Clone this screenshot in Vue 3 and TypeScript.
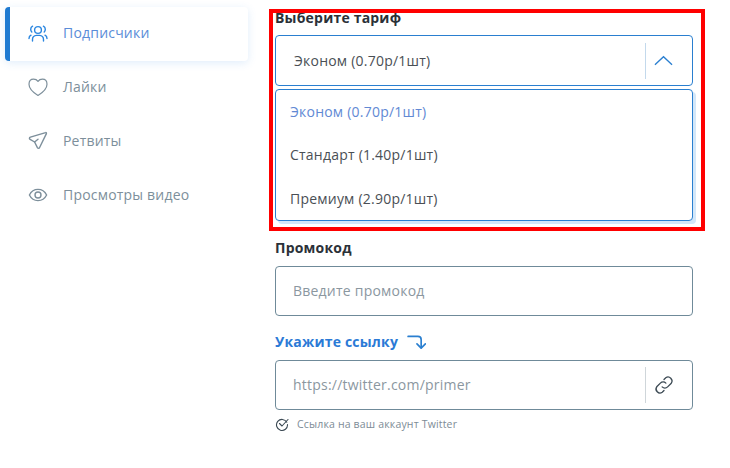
<script setup lang="ts">
const options = [
  { label: 'Эконом (0.70р/1шт)', active: true },
  { label: 'Стандарт (1.40р/1шт)', active: false },
  { label: 'Премиум (2.90р/1шт)', active: false },
]
</script>

<template>
  <div class="page">
    <nav class="side">
      <a class="item active">
        <svg class="ico" viewBox="0 0 20 20" fill="none" stroke="currentColor" stroke-width="1.4" stroke-linecap="round" stroke-linejoin="round">
          <circle cx="10" cy="7" r="3.4" />
          <path d="M4.5 18v-1.5C4.5 14 6.5 12.6 8.5 12.4h3c2 .2 4 1.6 4 4.1V18" />
          <path d="M4.6 3.2C3.4 3.800 2.700 5 2.700 6.300c0 1 .4 1.900 1.100 2.600" />
          <path d="M15.400 3.200c1.200.6 1.900 1.800 1.900 3.100 0 1-.4 1.900-1.100 2.600" />
          <path d="M1 15.500c0-1.600.8-2.700 2-3.300" />
          <path d="M19 15.500c0-1.600-.8-2.700-2-3.300" />
        </svg>
        <span>Подписчики</span>
      </a>
      <a class="item">
        <svg class="ico" viewBox="0 0 20 20" fill="none" stroke="currentColor" stroke-width="1.200" stroke-linejoin="round">
          <path d="M10 18.400C5.400 15.600 1 12 1 7.200 1 4.200 3 2.200 5.600 2.200c1.900 0 3.400.8 4.400 2.200 1-1.400 2.500-2.200 4.400-2.200 2.600 0 4.600 2 4.600 5 0 4.800-4.400 8.400-9 11.200z" />
        </svg>
        <span>Лайки</span>
      </a>
      <a class="item">
        <svg class="ico" viewBox="0 0 20 20" fill="none" stroke="currentColor" stroke-width="1.400" stroke-linejoin="round" stroke-linecap="round">
          <path d="M17.600 1.600 2.400 6.200c-1.200.4-1.300 1.600-.3 2.200L6.600 11l2.800 5.600c.6 1.100 1.800 1 2.200-.1L18.400 2.600c.2-.7-.2-1.200-.8-1z" />
          <path d="M6.600 11 10 8.300" />
        </svg>
        <span>Ретвиты</span>
      </a>
      <a class="item">
        <svg class="ico" viewBox="0 0 20 20" fill="none" stroke="currentColor" stroke-width="1.400">
          <path d="M1.400 10C3.200 6.400 6.400 4.400 10 4.400s6.800 2 8.600 5.600c-1.800 3.600-5 5.600-8.600 5.600S3.200 13.600 1.400 10z" />
          <circle cx="10" cy="10" r="3" />
        </svg>
        <span>Просмотры видео</span>
      </a>
    </nav>

    <main class="form">
      <div class="label first">Выберите тариф</div>
      <div class="box select">
        <span class="sel-text">Эконом (0.70р/1шт)</span>
        <span class="divider blue"></span>
        <svg class="chev" viewBox="0 0 20 11" fill="none" stroke="#2a7fd0" stroke-width="1.400">
          <path d="M1 10 10 1.500l9 8.500" />
        </svg>
      </div>
      <ul class="drop">
        <li v-for="o in options" :key="o.label" :class="{ on: o.active }">{{ o.label }}</li>
      </ul>

      <div class="label promo">Промокод</div>
      <div class="box input"><span class="ph">Введите промокод</span></div>

      <div class="label link">
        Укажите ссылку
        <svg class="arrow" viewBox="0 0 20 15" fill="none" stroke="#2a7fd0" stroke-width="1.800" stroke-linecap="round" stroke-linejoin="round">
          <path d="M1 1.500h10.500c2 0 3.500 1.500 3.500 3.500v8.500" />
          <path d="M10.500 9.500 15 14l4.500-4.500" />
        </svg>
      </div>
      <div class="box input">
        <span class="ph grow">https://twitter.com/primer</span>
        <span class="divider"></span>
        <svg class="chain" viewBox="0 0 20 20" fill="none" stroke="#3c4a54" stroke-width="1.200" stroke-linecap="round">
          <path d="M8.300 11.700a3.600 3.600 0 0 0 5 0l3.300-3.300a3.600 3.600 0 0 0-5-5L10 5" />
          <path d="M11.700 8.300a3.600 3.600 0 0 0-5 0l-3.300 3.300a3.600 3.600 0 0 0 5 5L10 15" />
        </svg>
      </div>
      <div class="hint">
        <svg class="check" viewBox="0 0 14 14" fill="none" stroke="#3c4a54" stroke-width="1.100" stroke-linecap="round" stroke-linejoin="round">
          <path d="M11.800 5.200A5.500 5.500 0 1 0 12.500 7.500" />
          <path d="M4.500 6.500 7 9l6-6.500" />
        </svg>
        <span>Ссылка на ваш аккаунт Twitter</span>
      </div>
    </main>

    <div class="marker"></div>
  </div>
</template>

<style>
html, body { margin: 0; background: #fff; }
</style>

<style scoped>
.page {
  position: relative;
  width: 730px;
  height: 468px;
  overflow: hidden;
  display: flex;
  font-family: "Open Sans", sans-serif;
  background: #fff;
}
.side {
  width: 243px;
  margin: 7px 0 0 5px;
  flex: none;
}
.item {
  display: flex;
  align-items: center;
  height: 54px;
  padding-left: 23px;
  padding-bottom: 2px;
  font-size: 14px;
  letter-spacing: 0.2px;
  color: #7d8f9b;
  border-radius: 4px;
  box-sizing: border-box;
}
.item span { padding-bottom: 2px; }
.item.active {
  color: #5a8cd8;
  background: #fff;
  border-left: 5px solid #1f7ad1;
  padding-left: 18px;
  box-shadow: 0 2px 8px rgba(60, 140, 230, 0.16);
}
.item.active .ico { color: #2a86e0; }
.ico { width: 20px; height: 20px; flex: none; margin-right: 15px; }
.form {
  width: 418px;
  margin-left: 27px;
  flex: none;
}
.label {
  font-size: 14px;
  font-weight: 700;
  color: #2b3138;
  line-height: 20px;
  letter-spacing: 0.2px;
}
.label.first { margin-top: 8px; margin-bottom: 7px; }
.label.promo { margin-top: 17px; margin-bottom: 8px; }
.label.link {
  display: flex;
  align-items: center;
  color: #2b7ad6;
  margin-top: 16px;
  margin-bottom: 8px;
}
.arrow { width: 19px; height: 14px; margin-left: 9px; }
.box {
  display: flex;
  align-items: center;
  box-sizing: border-box;
  border: 1px solid #6f8a99;
  border-radius: 4px;
  height: 50px;
  padding-left: 17px;
  font-size: 14px;
  letter-spacing: 0.22px;
}
.select {
  border-color: #2a7fd0;
  height: 51px;
  padding-left: 18px;
  color: #4a4f55;
}
.sel-text { flex: 1; }
.divider {
  width: 1px;
  height: 36px;
  background: #cfd6da;
  flex: none;
}
.divider.blue { background: #c3d9ec; }
.chev { width: 19px; height: 11px; margin: 0 19px 0 8px; flex: none; }
.drop {
  list-style: none;
  margin: 3px 0 0;
  padding: 0;
  box-sizing: border-box;
  height: 132px;
  border: 1px solid #2a7fd0;
  border-radius: 4px;
  background: #fff;
  box-shadow: 3px 3px 0 #d3e7f9;
}
.drop li {
  display: flex;
  align-items: center;
  box-sizing: border-box;
  height: 43.6px;
  padding-left: 14px;
  font-size: 14px;
  letter-spacing: 0.22px;
  color: #4a4f55;
}
.drop li:nth-child(2) { padding-bottom: 2px; }
.drop li.on { color: #6289d4; }
.ph { color: #8b979f; padding-bottom: 2px; }
.ph.grow { flex: 1; }
.chain { width: 22px; height: 22px; margin: 0 17px 0 7px; flex: none; }
.hint {
  display: flex;
  align-items: center;
  margin-top: 6px;
  font-size: 10.5px;
  letter-spacing: 0.17px;
  color: #7d8c96;
  line-height: 16px;
}
.check { width: 14px; height: 14px; margin-right: 8px; flex: none; }
.marker {
  position: absolute;
  left: 269px;
  top: 9px;
  width: 436px;
  height: 222px;
  box-sizing: border-box;
  border: 4px solid #f00;
  pointer-events: none;
}
</style>
